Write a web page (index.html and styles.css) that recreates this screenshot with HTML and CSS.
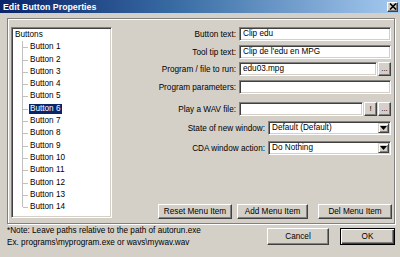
FILE: index.html
```html
<!DOCTYPE html>
<html>
<head>
<meta charset="utf-8">
<link rel="stylesheet" href="styles.css">
</head>
<body>
<div class="window">
  <div class="titlebar">
    <span class="title">Edit Button Properties</span>
    <span class="close"><svg width="8" height="7" viewBox="0 0 8 7"><path d="M1 0.5 L7 6.5 M7 0.5 L1 6.5" stroke="#000" stroke-width="1.6"/></svg></span>
  </div>
  <div class="content">
    <div class="group">
      <div class="tree">
        <div class="root">Buttons</div>
        <ul class="children">
          <li><span>Button 1</span></li>
          <li><span>Button 2</span></li>
          <li><span>Button 3</span></li>
          <li><span>Button 4</span></li>
          <li><span>Button 5</span></li>
          <li><span class="sel">Button 6</span></li>
          <li><span>Button 7</span></li>
          <li><span>Button 8</span></li>
          <li><span>Button 9</span></li>
          <li><span>Button 10</span></li>
          <li><span>Button 11</span></li>
          <li><span>Button 12</span></li>
          <li><span>Button 13</span></li>
          <li><span>Button 14</span></li>
        </ul>
      </div>
      <div class="form">
        <div class="row">
          <label>Button text:</label>
          <div class="field wide">Clip edu</div>
        </div>
        <div class="row g4">
          <label>Tool tip text:</label>
          <div class="field wide">Clip de l'edu en MPG</div>
        </div>
        <div class="row g3">
          <label>Program / file to run:</label>
          <div class="ctrl wide">
            <div class="field grow">edu03.mpg</div>
            <div class="btn mini">...</div>
          </div>
        </div>
        <div class="row g4">
          <label>Program parameters:</label>
          <div class="field wide"></div>
        </div>
        <div class="row g8">
          <label>Play a WAV file:</label>
          <div class="ctrl wide">
            <div class="field grow"></div>
            <div class="btn mini">!</div>
            <div class="btn mini">...</div>
          </div>
        </div>
        <div class="row g5">
          <label>State of new window:</label>
          <div class="field combo narrow"><span class="val">Default (Default)</span><span class="arrow"><svg width="7" height="4" viewBox="0 0 7 4"><path d="M0 0 H7 L3.5 4 Z" fill="#000"/></svg></span></div>
        </div>
        <div class="row g6">
          <label>CDA window action:</label>
          <div class="field combo narrow"><span class="val">Do Nothing</span><span class="arrow"><svg width="7" height="4" viewBox="0 0 7 4"><path d="M0 0 H7 L3.5 4 Z" fill="#000"/></svg></span></div>
        </div>
        <div class="actions">
          <div class="btn act reset">Reset Menu Item</div>
          <div class="btn act add">Add Menu Item</div>
          <div class="btn act del">Del Menu Item</div>
        </div>
      </div>
    </div>
    <div class="footer">
      <div class="note">
        <div>*Note: Leave paths relative to the path of autorun.exe</div>
        <div>Ex. programs\myprogram.exe or wavs\mywav.wav</div>
      </div>
      <div class="btn dlg cancel">Cancel</div>
      <div class="btn dlg ok">OK</div>
    </div>
  </div>
</div>
</body>
</html>
```
FILE: styles.css
```css
* { box-sizing: border-box; }
html, body { margin: 0; padding: 0; }
body {
  width: 400px;
  height: 257px;
  overflow: hidden;
  background: #d4d0c8;
  font-family: "Liberation Sans", Arial, sans-serif;
  font-size: 8.2px;
  color: #000;
}
.window { display: flex; flex-direction: column; height: 257px; }
.titlebar {
  height: 13px;
  display: flex;
  align-items: center;
  justify-content: space-between;
  padding: 0 2px 0 3px;
  background: linear-gradient(90deg, #0a246a 0%, #3a6ea5 45%, #a6caf0 100%);
}
.title { color: #fff; font-weight: bold; font-size: 8.8px; }
.close {
  width: 11px;
  height: 10px;
  display: flex;
  align-items: center;
  justify-content: center;
  background: #d4d0c8;
  border: 1px solid;
  border-color: #fff #404040 #404040 #fff;
  box-shadow: inset -1px -1px #808080;
}
.content { padding: 5px 5px 0 7px; display: flex; flex-direction: column; flex: 1; }
.group {
  height: 206px;
  border: 1px solid #808080;
  box-shadow: inset 1px 1px #fff, 1px 1px #fff;
  display: flex;
  padding: 8px 3px 5px 3px;
}
.tree {
  width: 101px;
  background: #fff;
  border: 1px solid;
  border-color: #808080 #fff #fff #808080;
  box-shadow: inset 1px 1px #404040, inset -1px -1px #d4d0c8;
  padding: 1px 0 0 3px;
}
.root { height: 12.3px; line-height: 12.3px; }
.children { list-style: none; margin: 0 0 0 7px; padding: 0; }
.children li {
  position: relative;
  height: 12.3px;
  line-height: 12.3px;
  padding-left: 7px;
}
.children li::before {
  content: "";
  position: absolute;
  left: 0; top: 0; bottom: 0;
  border-left: 1px solid #c0c0c0;
}
.children li:last-child::before { bottom: 50%; }
.children li::after {
  content: "";
  position: absolute;
  left: 1px; width: 5px; top: 6px;
  border-top: 1px solid #c0c0c0;
}
.children li span { display: inline-block; padding: 0 1px; line-height: 10px; }
.children li .sel { background: #0a246a; color: #fff; }
.form {
  flex: 1;
  display: flex;
  flex-direction: column;
  padding-right: 0;
}
.row { display: flex; height: 14px; align-items: center; }
.row label { flex: 1; text-align: right; padding-right: 3px; white-space: nowrap; }
.g3 { margin-top: 3px; }
.g4 { margin-top: 4px; }
.g5 { margin-top: 5px; }
.g6 { margin-top: 6px; }
.g8 { margin-top: 8px; }
.wide { width: 152px; }
.narrow { width: 123px; }
.field {
  height: 14px;
  background: #fff;
  border: 1px solid;
  border-color: #808080 #fff #fff #808080;
  box-shadow: inset 1px 1px #404040, inset -1px -1px #d4d0c8;
  padding: 0 2px 0 3px;
  line-height: 12px;
  white-space: nowrap;
}
.ctrl { display: flex; height: 14px; gap: 1px; }
.grow { flex: 1; }
.btn {
  background: #d4d0c8;
  border: 1px solid;
  border-color: #fff #404040 #404040 #fff;
  box-shadow: inset -1px -1px #808080;
  display: flex;
  align-items: center;
  justify-content: center;
  white-space: nowrap;
}
.mini { width: 13px; height: 14px; font-size: 8px; line-height: 8px; }
.combo { display: flex; align-items: center; padding: 0 2px 0 3px; }
.combo .val { flex: 1; }
.combo .arrow {
  width: 11px;
  height: 10px;
  display: flex;
  align-items: center;
  justify-content: center;
  background: #d4d0c8;
  border: 1px solid;
  border-color: #d4d0c8 #404040 #404040 #d4d0c8;
  box-shadow: inset 1px 1px #fff, inset -1px -1px #808080;
  margin-right: -1px;
}
.actions {
  margin-top: auto;
  margin-bottom: -1px;
  display: flex;
  justify-content: flex-end;
  height: 15px;
}
.act { height: 15px; }
.reset { width: 74px; }
.add { width: 71px; margin-left: 5px; }
.del { width: 74px; margin-left: 10px; margin-right: -1px; }
.footer { display: flex; align-items: flex-start; padding-top: 1px; }
.note { flex: 1; line-height: 12px; padding-top: 0; }
.dlg { height: 17px; margin-top: 3px; }
.cancel { width: 62px; }
.ok {
  width: 55px;
  margin-left: 11px;
  border: 1px solid #000;
  box-shadow: inset 1px 1px #fff, inset -1px -1px #404040, inset -2px -2px #808080;
}
```
